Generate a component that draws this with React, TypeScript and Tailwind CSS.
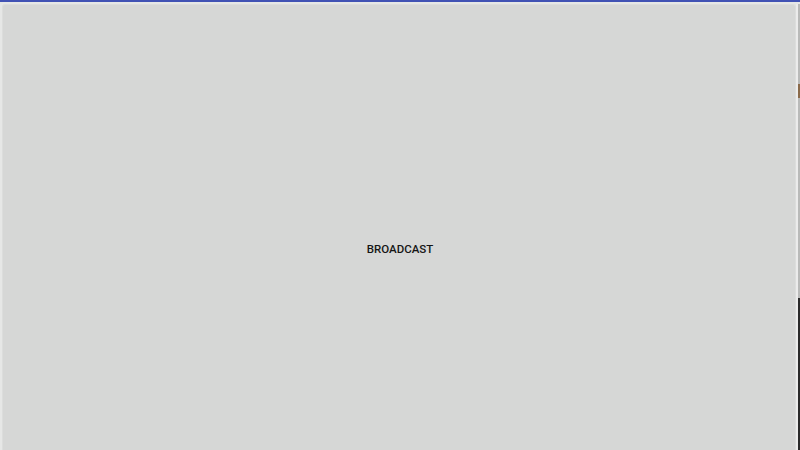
export default function App() {
  return (
    <div className="w-[800px] h-[450px] overflow-hidden bg-[#e6e7e6] flex flex-col" style={{ fontFamily: "Roboto, 'Noto Sans', sans-serif" }}>
      <div className="h-[2px] bg-[#4152b4] shrink-0" />
      <div className="flex flex-1 pt-[2px]">
        <div className="w-[2px] shrink-0" />
        <div className="flex-1 bg-[#d6d7d6] rounded-tl-[3px] rounded-tr-[3px] border-t border-l border-r border-[#dcdddc] flex justify-center items-start pt-[236px]">
          <span className="text-[11.5px] leading-[16px] font-medium text-[#151515] ml-[2px]">BROADCAST</span>
        </div>
        <div className="w-[2px] shrink-0 bg-[#ebebeb]" />
        <div className="w-[2px] shrink-0 flex flex-col">
          <div className="h-[80px] bg-[#b9bab9]" />
          <div className="h-[14px] bg-[#8a6a4a]" />
          <div className="h-[200px] bg-[#b9bab9]" />
          <div className="flex-1 bg-[#2b2b2b]" />
        </div>
      </div>
    </div>
  );
}
